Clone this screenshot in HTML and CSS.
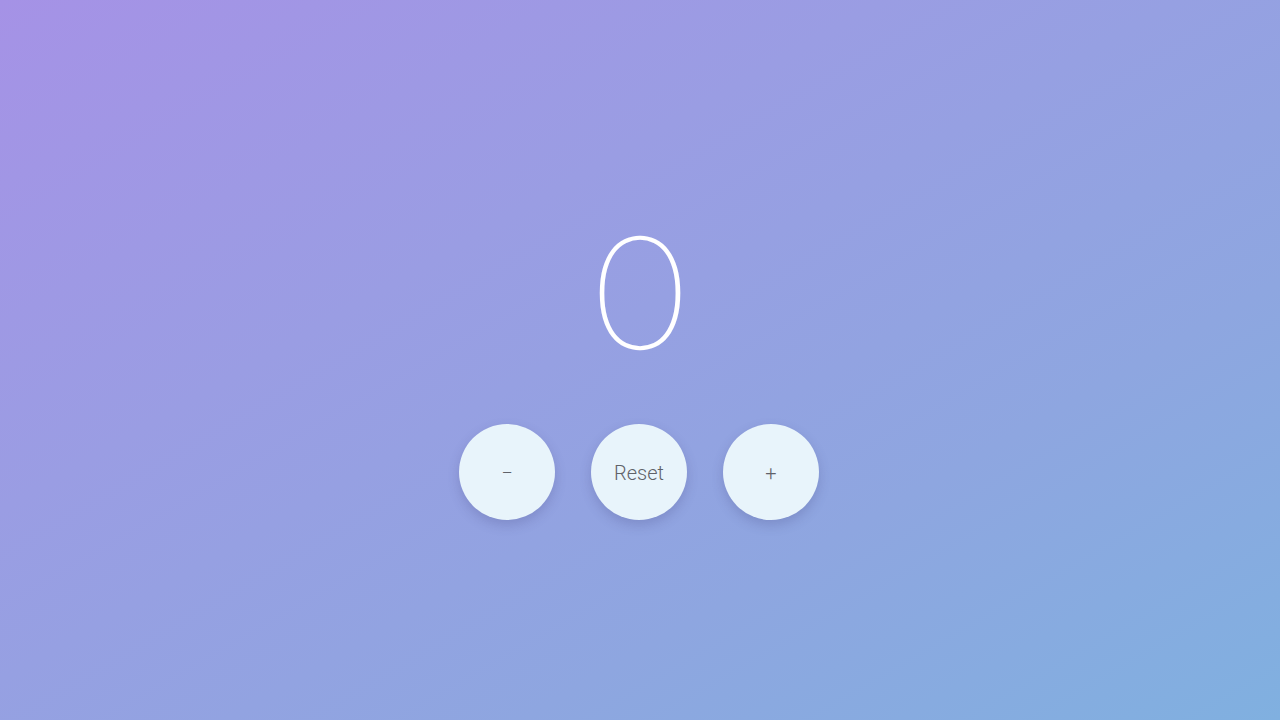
FILE: index.html
```html
<!DOCTYPE html>
<html lang="en">
<head>
<meta charset="utf-8">
<title>Counter</title>
<link rel="stylesheet" href="styles.css">
</head>
<body>
<main class="counter">
  <div class="count">0</div>
  <div class="controls">
    <button class="btn">−</button>
    <button class="btn">Reset</button>
    <button class="btn">+</button>
  </div>
</main>
</body>
</html>
```
FILE: styles.css
```css
html, body {
  margin: 0;
  height: 100%;
}
body {
  background: linear-gradient(150deg, #a592e6 0%, #9a9de3 35%, #8ea6e0 70%, #80b0e0 100%);
  font-family: Roboto, "Noto Sans", sans-serif;
}
.counter {
  height: 100%;
  display: flex;
  flex-direction: column;
  align-items: center;
  justify-content: center;
  gap: 50px;
}
.count {
  font-family: Lato, sans-serif;
  font-size: 157px;
  font-weight: 200;
  color: #ffffff;
  -webkit-text-stroke: 2.6px #ffffff;
  line-height: 174px;
}
.controls {
  display: flex;
  gap: 36px;
  margin-right: 2px;
}
.btn {
  width: 96px;
  height: 96px;
  border-radius: 50%;
  border: none;
  background: #e8f4fb;
  color: #5f6269;
  font-family: Roboto, sans-serif;
  font-weight: 300;
  font-size: 20px;
  padding: 2px 0 0;
  box-shadow: 0 5px 12px rgba(60, 60, 120, 0.22);
}
```
